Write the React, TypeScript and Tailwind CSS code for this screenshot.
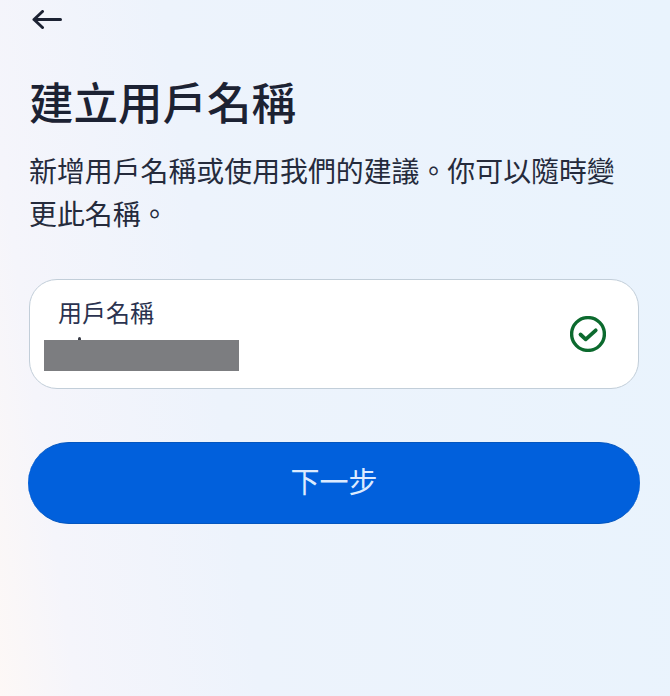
const cjk = "font-['Inter','Noto_Sans_CJK_TC',sans-serif]";

function BackArrow() {
  return (
    <svg viewBox="0 0 30 20" className="block h-5 w-[30px] fill-none stroke-[#1c2233] stroke-3" strokeLinecap="round" strokeLinejoin="round">
      <path d="M28.5 9.5H2M10.5 1.5 2 9.5l8.5 8" />
    </svg>
  );
}

function CheckIcon() {
  return (
    <svg viewBox="0 0 36 36" className="block size-9 fill-none stroke-[#0c6a2e]">
      <circle cx="18" cy="18" r="16.4" strokeWidth="3.4" />
      <path d="M10.5 18.5l5.2 4.8 10-9" strokeWidth="3.8" strokeLinecap="round" strokeLinejoin="round" />
    </svg>
  );
}

export default function App() {
  return (
    <div className={`${cjk} h-[696px] w-[670px] overflow-hidden bg-[linear-gradient(82deg,#fdf8f6_0%,#f5f5fb_10%,#edf3fc_34%,#e9f3fd_100%)] px-[29px] pt-[10px]`}>
      <div className="ml-[3px]">
        <BackArrow />
      </div>
      <h1 className="mt-[44px] text-[44.5px] leading-[60px] font-medium text-[#1c2233]">建立用戶名稱</h1>
      <p className="mt-[17px] w-[600px] text-[27.9px] leading-[43px] text-[#252b3c]">
        新增用戶名稱或使用我們的建議。你可以隨時變更此名稱。
      </p>
      <div className="relative mt-[42px] flex h-[110px] w-[610px] items-center justify-between rounded-[28px] border border-[#c2ced9] bg-white pr-[32px] pl-[28px]">
        <div className="h-full pt-[17px] text-[24px] leading-[34px] text-[#2b3350]">用戶名稱</div>
        <CheckIcon />
        <div className="absolute top-[57px] left-[48px] h-[3px] w-[3px] rounded-t-full bg-[#3a3d48]" />
        <div className="absolute top-[60px] left-[14px] h-[31px] w-[195px] bg-[#7c7d80]" />
      </div>
      <button className="mt-[53px] -ml-px flex h-[82px] w-[612px] items-center justify-center rounded-[41px] border-y border-[#0456bf] bg-[#0160dc] text-[29px] text-[#dcebff]">
        下一步
      </button>
    </div>
  );
}
